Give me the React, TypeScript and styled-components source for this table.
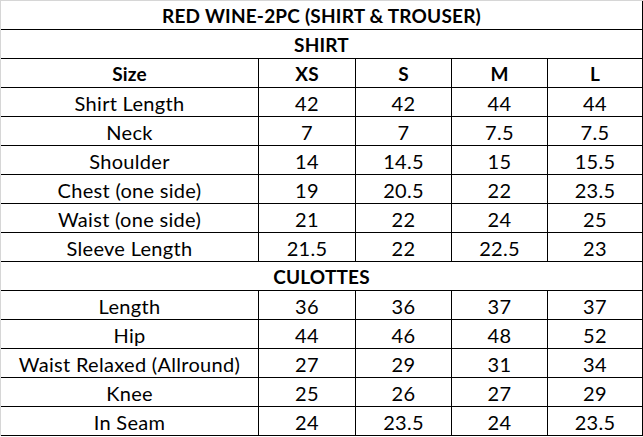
import React from 'react';
import styled, { createGlobalStyle } from 'styled-components';

const GlobalStyle = createGlobalStyle`
  html, body {
    margin: 0;
    padding: 0;
    background: #ffffff;
  }
  body {
    font-family: Lato, "Liberation Sans", sans-serif;
    color: #000;
  }
`;

const sizes = ['XS', 'S', 'M', 'L'];

const shirtRows: [string, string[]][] = [
  ['Shirt Length', ['42', '42', '44', '44']],
  ['Neck', ['7', '7', '7.5', '7.5']],
  ['Shoulder', ['14', '14.5', '15', '15.5']],
  ['Chest (one side)', ['19', '20.5', '22', '23.5']],
  ['Waist (one side)', ['21', '22', '24', '25']],
  ['Sleeve Length', ['21.5', '22', '22.5', '23']],
];

const culotteRows: [string, string[]][] = [
  ['Length', ['36', '36', '37', '37']],
  ['Hip', ['44', '46', '48', '52']],
  ['Waist Relaxed (Allround)', ['27', '29', '31', '34']],
  ['Knee', ['25', '26', '27', '29']],
  ['In Seam', ['24', '23.5', '24', '23.5']],
];

export default function App() {
  return (
    <>
      <GlobalStyle />
      <Sheet>
        <Cell $span $bold>RED WINE-2PC (SHIRT &amp; TROUSER)</Cell>
        <Cell $span $bold>SHIRT</Cell>
        <Cell $bold>Size</Cell>
        {sizes.map((s) => (
          <Cell key={s} $bold>{s}</Cell>
        ))}
        {shirtRows.map(([label, values]) => (
          <React.Fragment key={label}>
            <Cell>{label}</Cell>
            {values.map((v, i) => (
              <Cell key={i}>{v}</Cell>
            ))}
          </React.Fragment>
        ))}
        <Cell $span $bold>CULOTTES</Cell>
        {culotteRows.map(([label, values]) => (
          <React.Fragment key={label}>
            <Cell>{label}</Cell>
            {values.map((v, i) => (
              <Cell key={i}>{v}</Cell>
            ))}
          </React.Fragment>
        ))}
      </Sheet>
    </>
  );
}

const Sheet = styled.div`
  display: grid;
  grid-template-columns: 258px 97px 96px 96px 95px;
  grid-auto-rows: 29px;
  width: 643px;
  box-sizing: border-box;
  border-left: 1px solid #d6d6d6;
  border-top: 1px solid #d6d6d6;
`;

const Cell = styled.div<{ $span?: boolean; $bold?: boolean }>`
  grid-column: ${(p) => (p.$span ? '1 / -1' : 'auto')};
  display: flex;
  align-items: center;
  justify-content: center;
  box-sizing: border-box;
  padding-top: 1px;
  border-right: 1px solid #000;
  border-bottom: 1px solid #000;
  font-size: ${(p) => (p.$bold ? '19px' : '20px')};
  letter-spacing: ${(p) => (p.$bold ? '0.2px' : '0.3px')};
  font-weight: ${(p) => (p.$bold ? 700 : 400)};
  white-space: nowrap;
  line-height: 1;
`;
